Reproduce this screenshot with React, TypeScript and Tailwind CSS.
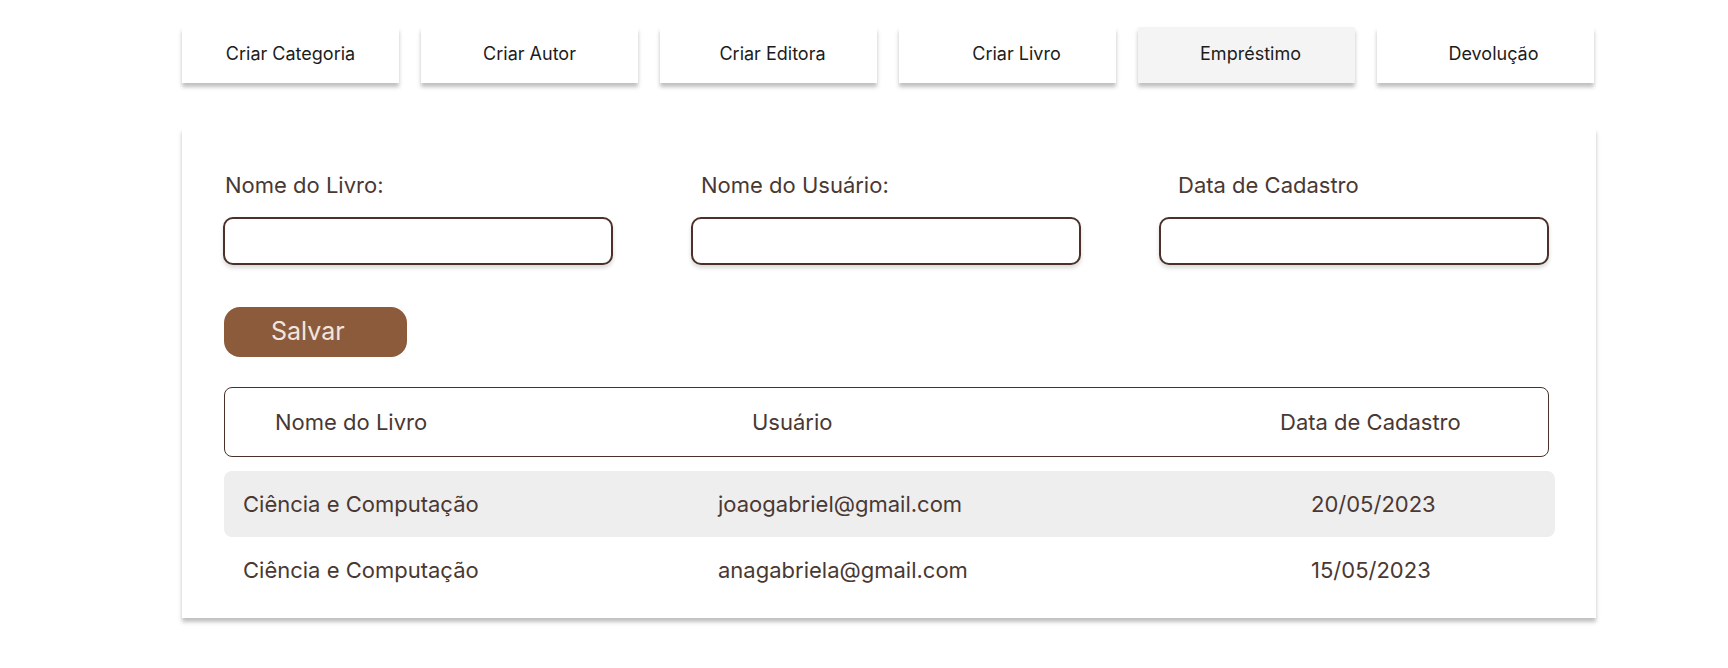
import { useState } from "react";

const tabs = [
  { label: "Criar Categoria", extra: "" },
  { label: "Criar Autor", extra: "" },
  { label: "Criar Editora", extra: "pl-[8px]" },
  { label: "Criar Livro", extra: "pl-[18px]" },
  { label: "Empréstimo", extra: "pl-[8px]" },
  { label: "Devolução", extra: "pl-[16px]" },
];

const fields = [
  { label: "Nome do Livro:", pad: "pl-[2px]" },
  { label: "Nome do Usuário:", pad: "pl-[10px]" },
  { label: "Data de Cadastro", pad: "pl-[19px]" },
];

const loans = [
  { book: "Ciência e Computação", user: "joaogabriel@gmail.com", date: "20/05/2023" },
  { book: "Ciência e Computação", user: "anagabriela@gmail.com", date: "15/05/2023" },
];

const App = () => {
  const [active, setActive] = useState(4);

  return (
    <div className="min-h-[668px] w-full bg-white font-['Inter','Liberation_Sans',sans-serif] text-[#4a3833]">
      <nav className="flex gap-[22px] pl-[182px] pt-[27px]">
        {tabs.map((tab, i) => (
          <button
            key={tab.label}
            onClick={() => setActive(i)}
            className={`flex h-[56px] w-[217px] items-center justify-center pb-[4px] text-[18px] text-[#1c1c1c] shadow-[0_4px_4px_rgba(0,0,0,0.25)] ${tab.extra} ${
              active === i ? "bg-[#f4f4f4]" : "bg-white"
            }`}
          >
            {tab.label}
          </button>
        ))}
      </nav>

      <section className="ml-[182px] mt-[45px] w-[1414px] bg-white pb-[15px] pl-[41px] pt-[44px] shadow-[0_4px_4px_rgba(0,0,0,0.25)]">
        <div className="flex gap-[78px]">
          {fields.map((f) => (
            <label key={f.label} className="flex w-[390px] flex-col">
              <span className={`text-[22px] leading-[27px] ${f.pad}`}>{f.label}</span>
              <input
                type="text"
                className="mt-[18px] h-[48px] w-[390px] rounded-[10px] border-2 border-[#4b3129] bg-white px-3 text-[18px] shadow-[0_3px_4px_rgba(0,0,0,0.15)] outline-none"
              />
            </label>
          ))}
        </div>

        <button className="ml-[1px] mt-[42px] flex h-[50px] w-[183px] items-center rounded-[16px] bg-[#8c5b3c] pl-[47px] text-[25px] text-[#f1e6df]">
          Salvar
        </button>

        <div className="ml-[1px] mt-[30px] flex h-[70px] w-[1325px] items-center rounded-[8px] border border-[#4b3129] pl-[50px] text-[22px]">
          <span className="w-[477px]">Nome do Livro</span>
          <span className="w-[528px]">Usuário</span>
          <span>Data de Cadastro</span>
        </div>

        <div className="ml-[1px] mt-[14px] w-[1331px]">
          {loans.map((row, i) => (
            <div
              key={row.user}
              className={`flex h-[66px] items-center rounded-[8px] pl-[19px] text-[22px] ${
                i === 0 ? "bg-[#eeeeee]" : ""
              }`}
            >
              <span className="w-[475px]">{row.book}</span>
              <span className="w-[593px]">{row.user}</span>
              <span>{row.date}</span>
            </div>
          ))}
        </div>
      </section>
    </div>
  );
};

export default App;
